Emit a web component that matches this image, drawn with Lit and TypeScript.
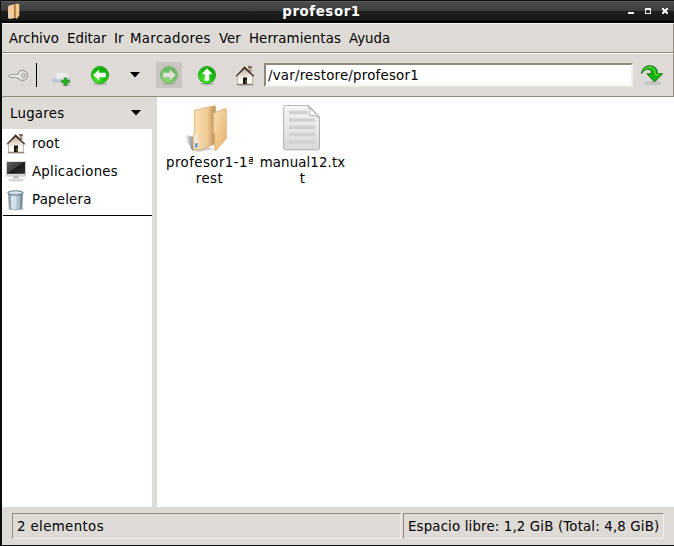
import { LitElement, html, css, svg } from "lit";
import { customElement, property } from "lit/decorators.js";

const house = svg`
  <ellipse cx="10" cy="20" rx="9" ry="1" fill="#999" opacity=".5"/>
  <path d="M13.5 2h3v5h-3z" fill="#b59a8c"/><path d="M13 1.2h4v1.4h-4z" fill="#6b4a3e"/>
  <path d="M2.5 10 9.5 3 17.5 10v9.5h-15z" fill="url(#hw)" stroke="#9a8c80" stroke-width=".6"/>
  <path d="M.6 11 9.6 1.2l9.8 9.8-1.3.6-8.5-7.6-8 7.4z" fill="#3d2f2a"/>
  <path d="M2 19.3h16" stroke="#8a7a70"/>
  <path d="M8 12.5h4V19H8z" fill="#17120b"/><path d="M10.5 15h1v3.6h-1z" fill="#8c7b42"/>`;

const ring = svg`
  <ellipse cx="10" cy="19" rx="7.5" ry="1.5" fill="#555" opacity=".25"/>
  <circle cx="10" cy="10" r="8.6" fill="url(#gr)" stroke="#12960e" stroke-width=".8"/>
  <circle cx="10" cy="10" r="7.8" fill="none" stroke="#5ede3c" stroke-width=".6" opacity=".7"/>`;
const arrow = "M3.2 10 9.2 4.4V7.8H15.8V12.2H9.2V15.6z";

const defs = svg`<defs>
  <radialGradient id="gr" cx=".35" cy=".75" r=".8"><stop offset="0" stop-color="#55e62c"/><stop offset=".5" stop-color="#17c50d"/><stop offset="1" stop-color="#08980a"/></radialGradient>
  <linearGradient id="hw" x1="0" y1="0" x2="0" y2="1"><stop offset=".1" stop-color="#cdb6a8"/><stop offset=".7" stop-color="#fcf9f5"/></linearGradient>
  <linearGradient id="fd" x1="0" y1="0" x2="1" y2="1"><stop offset="0" stop-color="#fae0b4"/><stop offset="1" stop-color="#e5b06a"/></linearGradient>
  <linearGradient id="fb" x1="0" y1="0" x2="1" y2="0"><stop offset="0" stop-color="#fae0b6"/><stop offset=".65" stop-color="#efca94"/><stop offset="1" stop-color="#b88a4d"/></linearGradient>
  <linearGradient id="sh" x1="0" y1="0" x2="1" y2="0"><stop offset="0" stop-color="#777" stop-opacity=".15"/><stop offset="1" stop-color="#555" stop-opacity=".8"/></linearGradient>
  <linearGradient id="pg" x1="0" y1="0" x2="0" y2="1"><stop offset="0" stop-color="#f4f4f4"/><stop offset="1" stop-color="#d9d9d9"/></linearGradient>
  <linearGradient id="bn" x1="0" y1="0" x2="1" y2="0"><stop offset="0" stop-color="#6d8292"/><stop offset=".3" stop-color="#dbe9f1"/><stop offset=".65" stop-color="#b0c5d2"/><stop offset="1" stop-color="#667b8c"/></linearGradient>
  <linearGradient id="mn" x1="0" y1="0" x2="1" y2="1"><stop offset="0" stop-color="#606060"/><stop offset=".47" stop-color="#3c3f3e"/><stop offset=".5" stop-color="#171a19"/><stop offset="1" stop-color="#303332"/></linearGradient>
</defs>`;

const folder = svg`
  <path d="M0 30 8 32V46Q5 45 4 41 0 36 0 30z" fill="url(#sh)"/><path d="M4 43 10 38 28 44 12 47z" fill="#555" opacity=".3"/>
  <path d="M8.5 5.2 28.5.8 29.5 1.5V39L14 44.6 8 44.8 7 44V31.5L8.5 28z" fill="url(#fb)" stroke="#dcae74" stroke-width=".8"/>
  <path d="M27.6 8.3 38.8 3.5 40.3 4.2V33.5L30 45.7 28.6 45V29.5L27.3 27z" fill="url(#fd)" stroke="#dcae74" stroke-width=".8"/>
  <path d="M8.7 30 11.7 28.7V42.5L8.7 43.5z" fill="#ececea"/><path d="M8.9 38.5 11.5 38V42L8.9 43z" fill="#5a9bd0"/>`;

const icons: Record<string, unknown> = {
  house,
  back: svg`${ring}<path d=${arrow} fill="#fff"/>`,
  forward: svg`${ring}<path d=${arrow} fill="#fff" transform="rotate(180 10 10)"/>`,
  up: svg`${ring}<path d=${arrow} fill="#fff" transform="rotate(90 10 10)"/>`,
  key: svg`<g fill="none"><path d="M10 6.8H1.8L.6 8 2 9.5H4L5 8.8 6 10 7.5 9 8.6 9.8H10Q11 12.3 14.2 12.3A4.9 4.9 0 1 0 10 5.5z" fill="#e6e6e3" stroke="#888984"/><path d="M2 7.8H10" stroke="#fff"/><ellipse cx="15.5" cy="7.5" rx="1.7" ry="2.1" fill="#dedbd7" stroke="#90918d"/></g>`,
  newtab: svg`<path d="M3.8 2Q4.1.2 5.4.2H14.5Q15.8.2 16 2L17 8H3.4z" fill="#ededed" stroke="#d0d0d0" stroke-width=".5"/>
    <path d="M0 6.5H19V8.5L17 10.5H1L0 8.5z" fill="#bcc5d6"/><path d="M4 5.6H16V7.4H4z" fill="#dfe3eb"/>
    <ellipse cx="14" cy="13.2" rx="4" ry="1" fill="#777" opacity=".4"/>
    <path d="M12.2 6h2.6v2.3h2.5v2.5h-2.5v2.5h-2.6v-2.5H9.7V8.3h2.5z" fill="#20b817" stroke="#2f8a2b" stroke-width=".9"/>`,
  go: svg`<ellipse cx="12" cy="18" rx="9" ry="2" fill="#666" opacity=".2"/>
    <path d="M.5 8.5Q1.5 1 8.5.8Q16.5.7 16.5 8.8H21.5L13.5 17 6 8.8H10.5Q10.6 3.8 6.5 4.2Q2.5 4.5.5 8.5z" fill="#10b70a" stroke="#18721a"/>
    <path d="M2.5 5Q5 2 9 2.1Q14 2.5 14.5 9.8H18" fill="none" stroke="#85dc4c" stroke-width="1"/>`,
  computer: svg`<ellipse cx="10" cy="18.8" rx="8" ry="1.8" fill="#aaa" opacity=".5"/><path d="M8 14h4l1 3.5H7z" fill="#bbb"/><path d="M5.5 17.3h9l1 1.3h-11z" fill="#e6e6e6"/>
    <path d="M.5.8h19v14.4H.5z" fill="#dadada" stroke="#aaa" stroke-width=".5"/><path d="M1 1h18v11.8H1z" fill="url(#mn)"/>`,
  trash: svg`<path d="M0 18Q9 22 17 18V20H3z" fill="#999" opacity=".4"/><path d="M1.5 3.5h14L15 18.8Q8.5 21.3 2.2 18.8z" fill="url(#bn)" stroke="#7a8d9b" stroke-width=".6"/>
    <path d="M5 6v12.5M8.5 6v13M12 6v12.5" stroke="#fff" opacity=".35"/>
    <ellipse cx="8.5" cy="2.9" rx="7.8" ry="2.2" fill="#a9bcc8" stroke="#61788a" stroke-width=".9"/><ellipse cx="8.5" cy="2.7" rx="5.8" ry="1.1" fill="#dce8ee"/>`,
  folder,
  file: svg`<path d="M2.5.6H26L36.5 12V43Q36.5 44.9 34.6 44.9H2.7Q.6 44.9.6 43V2.6Q.6.6 2.5.6z" fill="url(#pg)" stroke="#b0b0b0"/>
    <path d="M2.6 1.8H25" stroke="#fff"/><path d="M6 7.5H25M6 15H32M6 22.2H32M6 29.5H32M6 36.8H32" stroke="#d0d0d0" stroke-width="3.4"/>
    <path d="M25 .8Q28.5 5 26.5 10.3Q32 9.7 36.2 12.6Z" fill="#fafafa" stroke="#aaa" stroke-width=".9"/>`,
  smallfolder: svg`<path d="M0 13 3 11 4 17z" fill="#111"/><path d="M2 2.5 11 .6V14.5L2.5 16 1 15V4z" fill="#f0cc98"/><path d="M7 1.5 8.8 1.2V14L7 15z" fill="#ab753d"/><path d="M8.8 2 12.3.8V12.5L9.3 16.6z" fill="#f2c98e"/><path d="M1.5 11h1v4h-1z" fill="#ddd"/>`,
  down: svg`<path d="M0 0H10L5 5.5z" fill="#000"/>`,
  min: svg`<path d="M0 4H6V6H0z" fill="#eee"/>`,
  max: svg`<path d="M0 0H6V6H0zM1 2V5H5V2z" fill="#eee" fill-rule="evenodd"/>`,
  close: svg`<path d="M0 0H2V1H4V0H6V2H5V4H6V6H4V5H2V6H0V4H1V2H0z" fill="#eee"/>`,
};

@customElement("fm-icon")
class FmIcon extends LitElement {
  @property() name = "";
  @property({ type: Number }) w = 20;
  @property({ type: Number }) h = 20;
  static styles = css`:host { display: block; flex: none; } svg { display: block; overflow: visible; }`;
  render() {
    return html`<svg width=${this.w} height=${this.h} viewBox="0 0 ${this.w} ${this.h}">${defs}${icons[this.name]}</svg>`;
  }
}

@customElement("app-root")
class AppRoot extends LitElement {
  static styles = css`
    :host { display: block; height: 546px; font: 13.333px/16px "DejaVu Sans", sans-serif; color: #000; }
    * { box-sizing: border-box; }
    .window { height: 546px; display: grid; grid-template-rows: 23px 30px 44px 410px 38px; background: #dedbd7; border-left: 2px solid #0b0b0b; border-bottom: 1px solid #111; }
    .title { margin-left: -2px; display: grid; grid-template-columns: 26px 1fr 58px; background: linear-gradient(#111 0 1px, #5a5a5a 1px 2px, #4b4b4b 2px, #3d3d3d 11px, #1e1e1e 11px, #191919 20px, #050505 21px); border-left: 1px solid #111; color: #fff; }
    .title fm-icon { margin: 3px 0 0 6px; }
    .title h1 { margin: 4px 0 0; font-size: 13.333px; font-weight: bold; text-align: center; line-height: 16px; letter-spacing: .6px; }
    .title .controls { display: flex; gap: 11px; padding: 8px 0 0 12px; }
    .title .controls fm-icon { margin: 0; }
    .menu { display: flex; border-top: 1px solid #f7f6f5; border-right: 1px solid #928b80; border-bottom: 1px solid #918979; padding: 7px 0 0 7px; }
    .menu span { white-space: nowrap; }
    .toolbar { display: flex; align-items: center; border-top: 1px solid #f7f6f5; border-right: 1px solid #928b80; border-bottom: 1px solid #918979; padding-left: 6px; }
    .sep { width: 1px; height: 24px; background: #000; margin: 0 15px 0 9px; }
    .back { margin-left: 19px; }
    .caret { margin-left: 20px; }
    .off { width: 26px; height: 26px; background: #cac5c1; display: grid; place-items: center; margin: 0 15px 0 16px; }
    .off fm-icon { opacity: .5; }
    .home { margin: 0 9px 0 18px; }
    .entry { width: 369px; height: 24px; background: #fff; border: 2px solid; border-color: #8f897c #efedea #efedea #8f897c; padding: 3px 0 0 2px; white-space: nowrap; letter-spacing: .23px; }
    .go { margin-left: 8px; }
    .body { display: grid; grid-template-columns: 150px 5px 1fr; background: #dedbd7; }
    .side { display: grid; grid-template-rows: 32px 378px; }
    .places { display: flex; justify-content: space-between; align-items: center; padding: 0 11px 0 8px; letter-spacing: .25px; }
    .places span, .place span { padding-top: 2px; }
    .list { background: #fff; }
    .place { display: grid; grid-template-columns: 30px 1fr; height: 28px; align-items: center; letter-spacing: .22px; }
    .place fm-icon { margin-left: 4px; }
    .place .trash { margin: 2px 0 0 5px; }
    .line { height: 1px; background: #000; margin: 2px 0 0 1px; }
    .files { grid-column: 3; background: #fff; display: flex; gap: 6px; padding: 8px 0 0 9px; }
    .item { width: 87px; text-align: center; }
    .item fm-icon { width: fit-content; margin: 0 auto 4px 20px; }
    .item .file { margin-left: 24px; }
    .label { overflow: hidden; white-space: nowrap; height: 32px; letter-spacing: .45px; }
    .file + .label { letter-spacing: .12px; }
    .status { display: grid; grid-template-columns: 389px 261px; gap: 2px; padding: 6px 0 0 10px; }
    .cell { height: 26px; border: 1px solid; border-color: #918c84 #f1efed #f1efed #918c84; padding: 5px 0 0 4px; white-space: nowrap; letter-spacing: .16px; }
    .cell:first-child { letter-spacing: .38px; }
  `;
  menu: [string, number, number][] = [["Archivo", 58, 0], ["Editar", 47, 0], ["Ir", 16, 0], ["Marcadores", 89, 0.35], ["Ver", 30, 0], ["Herramientas", 100, 0.1], ["Ayuda", 50, 0]];
  places: [string, string, number][] = [["house", "root", 20], ["computer", "Aplicaciones", 20], ["trash", "Papelera", 17]];
  render() {
    return html`<div class="window">
      <div class="title"><fm-icon name="smallfolder" w="13" h="17"></fm-icon><h1>profesor1</h1>
        <div class="controls"><fm-icon name="min" w="6" h="7"></fm-icon><fm-icon name="max" w="6" h="7"></fm-icon><fm-icon name="close" w="6" h="7"></fm-icon></div></div>
      <div class="menu">${this.menu.map(([t, w, s]) => html`<span style="width:${w}px;letter-spacing:${s}px">${t}</span>`)}</div>
      <div class="toolbar">
        <fm-icon name="key" w="19" h="15"></fm-icon><div class="sep"></div>
        <fm-icon name="newtab" w="19" h="7"></fm-icon>
        <fm-icon class="back" name="back"></fm-icon><fm-icon class="caret" name="down" w="10" h="6"></fm-icon>
        <div class="off"><fm-icon name="forward"></fm-icon></div>
        <fm-icon name="up"></fm-icon><fm-icon class="home" name="house"></fm-icon>
        <div class="entry">/var/restore/profesor1</div><fm-icon class="go" name="go" w="22" h="20"></fm-icon>
      </div>
      <div class="body">
        <div class="side"><div class="places"><span>Lugares</span><fm-icon name="down" w="10" h="6"></fm-icon></div>
          <div class="list">${this.places.map(([i, t, w]) => html`<div class="place"><fm-icon class=${i} name=${i} w=${w}></fm-icon><span>${t}</span></div>`)}<div class="line"></div></div></div>
        <div class="files">
          <div class="item"><fm-icon name="folder" w="41" h="46"></fm-icon><div class="label">profesor1-1ª<br>rest</div></div>
          <div class="item"><fm-icon class="file" name="file" w="38" h="46"></fm-icon><div class="label">manual12.tx<br>t</div></div>
        </div>
      </div>
      <div class="status"><div class="cell">2 elementos</div><div class="cell">Espacio libre: 1,2 GiB (Total: 4,8 GiB)</div></div>
    </div>`;
  }
}
